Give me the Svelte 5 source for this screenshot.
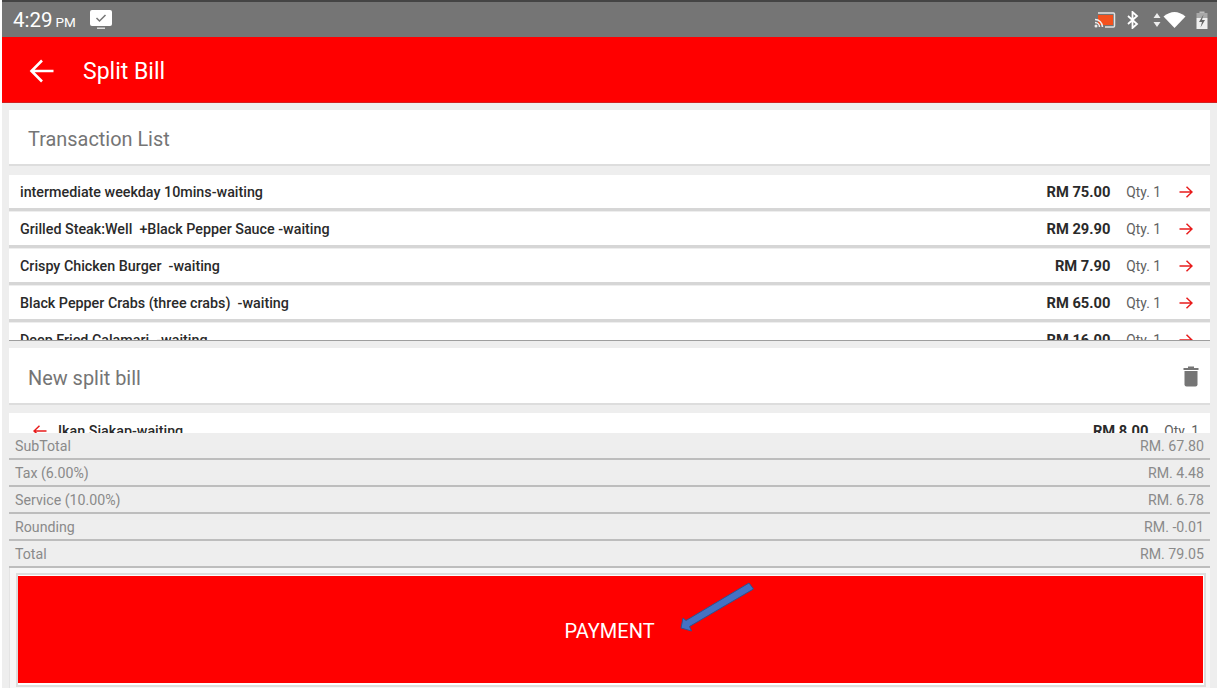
<script lang="ts">
	const items = [
		{ name: 'intermediate weekday 10mins-waiting', price: 'RM 75.00' },
		{ name: 'Grilled Steak:Well  +Black Pepper Sauce -waiting', price: 'RM 29.90' },
		{ name: 'Crispy Chicken Burger  -waiting', price: 'RM 7.90' },
		{ name: 'Black Pepper Crabs (three crabs)  -waiting', price: 'RM 65.00' },
		{ name: 'Deep Fried Calamari  -waiting', price: 'RM 16.00' }
	]

	const totals = [
		{ label: 'SubTotal', value: 'RM. 67.80' },
		{ label: 'Tax (6.00%)', value: 'RM. 4.48' },
		{ label: 'Service (10.00%)', value: 'RM. 6.78' },
		{ label: 'Rounding', value: 'RM. -0.01' },
		{ label: 'Total', value: 'RM. 79.05' }
	]
</script>

<div class="screen">
	<header class="status">
		<div class="status-left">
			<span class="time">4:29</span>
			<span class="ampm">PM</span>
			<svg class="screen-icon" width="24" height="22" viewBox="0 0 24 22">
				<rect x="1" y="1" width="22" height="16" rx="2" fill="#fff" />
				<rect x="8" y="18.5" width="8" height="1.5" fill="#ddd" />
				<path d="M7.5 9l3 3 6-6" fill="none" stroke="#777" stroke-width="1.5" />
			</svg>
		</div>
		<div class="status-right">
			<svg width="22" height="16" viewBox="0 0 22 16">
				<path d="M4 1h15.500a1 1 0 0 1 1 1v12a1 1 0 0 1-1 1H11" fill="none" stroke="#e4e4e4" stroke-width="1.500" />
				<rect x="4" y="3" width="15" height="10" fill="#f4511e" />
				<path d="M1 7.500a7.500 7.500 0 0 1 7.500 7.500M1 10.500a4.500 4.500 0 0 1 4.500 4.500" fill="none" stroke="#eee" stroke-width="1.500" />
				<circle cx="2" cy="14" r="1.500" fill="#eee" />
			</svg>
			<svg class="bt" width="12" height="18" viewBox="0 0 12 18">
				<path d="M1 5l9 8-4.500 4V1L10 5l-9 8" fill="none" stroke="#fff" stroke-width="1.800" />
			</svg>
			<svg class="updown" width="8" height="16" viewBox="0 0 8 16">
				<path d="M4 1l3.500 5h-7zM4 15l3.500-5h-7z" fill="#eee" />
			</svg>
			<svg class="wifi" width="23" height="17" viewBox="0 0 23 17">
				<path d="M0.500 5.500Q11.500 -3.500 22.500 5.500L11.500 17z" fill="#fff" />
			</svg>
			<svg class="battery" width="12" height="18" viewBox="0 0 12 18">
				<rect x="3.500" y="0.500" width="5" height="2" fill="#bbb" />
				<rect x="0.500" y="2" width="11" height="5" fill="#a8a8a8" />
				<rect x="0.500" y="7" width="11" height="11" fill="#f0f0f0" />
				<path d="M7.500 3.500L3 11h3L4.500 16.500 9 9H6z" fill="#666" />
			</svg>
		</div>
	</header>

	<div class="appbar">
		<svg width="26" height="26" viewBox="0 0 26 26">
			<path d="M24.500 13H3M13 2.500L2.500 13 13 23.500" fill="none" stroke="#fff" stroke-width="2.600" />
		</svg>
		<h1>Split Bill</h1>
	</div>

	<main class="content">
		<section class="card head-card first">
			<h2>Transaction List</h2>
		</section>

		<div class="list">
			{#each items as item}
				<div class="row">
					<span class="name">{item.name}</span>
					<span class="price">{item.price}</span>
					<span class="qty">Qty. 1</span>
					<svg class="arrow" width="14" height="12" viewBox="0 0 14 12">
						<path d="M0.500 6H13M7.500 0.800L13 6 7.500 11.200" fill="none" stroke="#e81c1c" stroke-width="1.500" />
					</svg>
				</div>
			{/each}
		</div>

		<section class="card head-card">
			<h2>New split bill</h2>
			<svg class="trash" width="16" height="22" viewBox="0 0 16 22">
				<path d="M0.500 3h15v2h-15zM5 1.500h6V3H5z" fill="#757575" />
				<path d="M1.500 6h13v13.500a2 2 0 0 1-2 2h-9a2 2 0 0 1-2-2z" fill="#757575" />
			</svg>
		</section>

		<div class="split-list">
			<div class="row reverse">
				<svg class="arrow" width="14" height="12" viewBox="0 0 14 12">
					<path d="M13.500 6H1M6.500 0.800L1 6 6.500 11.200" fill="none" stroke="#e81c1c" stroke-width="1.500" />
				</svg>
				<span class="name">Ikan Siakap-waiting</span>
				<span class="price">RM 8.00</span>
				<span class="qty">Qty. 1</span>
			</div>
		</div>

		<div class="totals">
			{#each totals as total}
				<div class="total-row">
					<span>{total.label}</span>
					<span>{total.value}</span>
				</div>
			{/each}
		</div>

		<div class="pay-box">
			<div class="pay-frame">
				<button class="pay">PAYMENT</button>
			</div>
		</div>
	</main>

	<svg class="callout" width="78" height="52" viewBox="0 0 78 52">
		<path d="M71 1L75.500 7 11.500 44.500 13.500 49 3 46 5 36 8 38.500z" fill="#4472c4" stroke="#2f528f" stroke-width="1" />
	</svg>
</div>

<style>
	:global(body) {
		margin: 0;
		background: #fff;
	}
	.screen {
		position: relative;
		width: 1217px;
		height: 688px;
		overflow: hidden;
		box-sizing: border-box;
		padding-left: 2px;
		background: #fff;
		font-family: Roboto, 'Liberation Sans', sans-serif;
	}
	.status {
		display: flex;
		justify-content: space-between;
		align-items: center;
		box-sizing: border-box;
		height: 37px;
		padding: 0 9px 0 11px;
		background: #757575;
		border-top: 2px solid #444;
		color: #fff;
	}
	.status-left {
		display: flex;
		align-items: center;
	}
	.time {
		margin-top: 1px;
		font-size: 20.5px;
		line-height: 24px;
	}
	.ampm {
		margin: 4px 0 0 3px;
		font-size: 13.5px;
	}
	.screen-icon {
		margin: 0 0 0 13px;
	}
	.status-right {
		display: flex;
		align-items: center;
	}
	.bt {
		margin-left: 11px;
	}
	.updown {
		margin-left: 14px;
	}
	.wifi {
		margin-left: 2px;
	}
	.battery {
		margin-left: 10px;
	}
	.appbar {
		display: flex;
		align-items: center;
		box-sizing: border-box;
		height: 66px;
		padding: 3px 0 0 27px;
		background: #f00;
		border-bottom: 1px solid #d32020;
	}
	.appbar h1 {
		margin: 0 0 0 28px;
		font-size: 23px;
		font-weight: 400;
		color: #fff;
	}
	.content {
		box-sizing: border-box;
		height: 585px;
		padding: 7px 7px 0 7px;
		background: #eee;
	}
	.card {
		background: #fff;
	}
	.head-card {
		display: flex;
		align-items: center;
		justify-content: space-between;
		box-sizing: border-box;
		height: 57px;
		padding: 5px 11px 0 19px;
		border-bottom: 2px solid #ddd;
	}
	.first {
		height: 56px;
	}
	.head-card h2 {
		margin: 0;
		font-size: 19.9px;
		font-weight: 400;
		color: #757575;
	}
	.trash {
		margin-top: -4px;
	}
	.list {
		box-sizing: border-box;
		height: 166px;
		margin: 9px 0 7px;
		overflow: hidden;
		border-bottom: 1px solid #9e9e9e;
	}
	.row {
		display: flex;
		align-items: center;
		box-sizing: border-box;
		height: 36px;
		margin-bottom: 1px;
		padding: 0 17px 0 11px;
		background: #fff;
		border-bottom: 3px solid #d6d6d6;
		font-size: 14.3px;
		color: #2a2a2a;
	}
	.name {
		flex: 1;
		font-weight: 500;
		white-space: pre;
	}
	.price {
		font-size: 14.7px;
		font-weight: 700;
	}
	.qty {
		margin-left: 16px;
		font-size: 13.8px;
		color: #616161;
	}
	.arrow {
		margin-left: 18px;
	}
	.split-list {
		height: 20px;
		margin-top: 8px;
		overflow: hidden;
	}
	.reverse {
		padding: 2px 11px 0 24px;
	}
	.reverse .arrow {
		margin: 0 11px 0 0;
	}
	.totals {
		display: flex;
		flex-direction: column;
	}
	.total-row {
		display: flex;
		align-items: center;
		justify-content: space-between;
		box-sizing: border-box;
		height: 27px;
		padding: 0 6px;
		border-bottom: 2px solid #bdbdbd;
		font-size: 14.2px;
		color: #8a8a8a;
	}
	.pay-box {
		box-sizing: border-box;
		height: 120px;
		padding: 5px 4px 0 6px;
		background: #f7f7f7;
		border-left: 1px solid #e4e4e4;
	}
	.pay-frame {
		padding: 1px 1px 2px 0;
		background: #fff;
		border: 2px solid #ddd;
	}
	.pay {
		display: block;
		width: 100%;
		height: 107px;
		padding: 3px 2px 0 0;
		background: #f00;
		border: none;
		border-radius: 0;
		font-family: inherit;
		font-size: 20px;
		color: #fff;
	}
	.callout {
		position: absolute;
		left: 678px;
		top: 582px;
	}
</style>
